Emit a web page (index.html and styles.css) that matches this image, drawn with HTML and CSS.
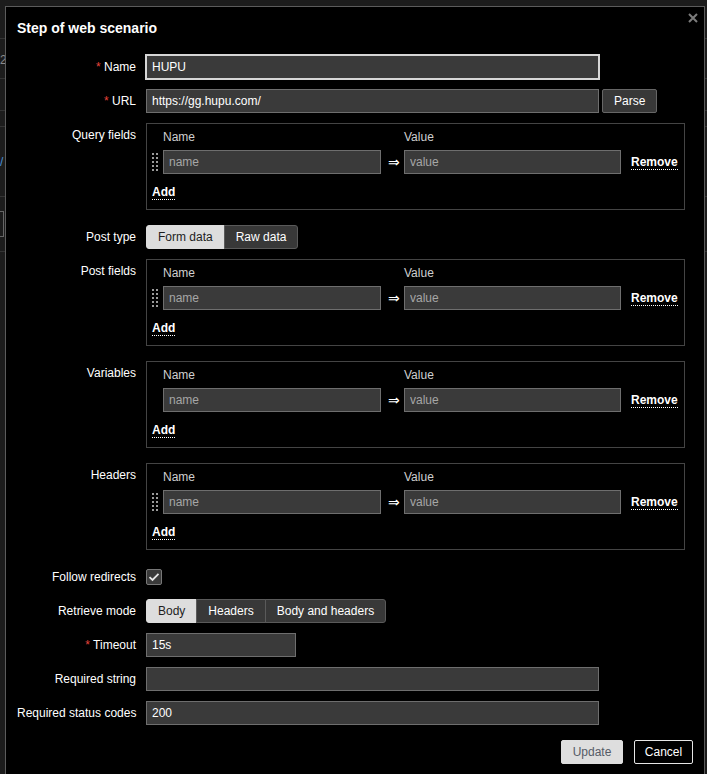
FILE: index.html
```html
<!DOCTYPE html>
<html>
<head>
<meta charset="utf-8">
<link rel="stylesheet" href="styles.css">
</head>
<body>
<div class="bg">
  <div class="bg-row r1"></div>
  <div class="bg-row r2"><span class="bg-num">2</span></div>
  <div class="bg-row r3"></div>
  <div class="bg-row r4"></div>
  <div class="bg-row r5"><span class="bg-link">/</span></div>
  <div class="bg-row r6"><span class="bg-input"></span></div>
</div>

<div class="dialog">
  <div class="dlg-head">
    <h4 class="dlg-title">Step of web scenario</h4>
    <span class="close"><svg width="10" height="10" viewBox="0 0 10 10"><path d="M1 1L9 9M9 1L1 9" stroke="#7c7c7c" stroke-width="2"/></svg></span>
  </div>

  <div class="form">
    <div class="lbl"><span class="req">*</span> Name</div>
    <div class="fld"><input class="in wide focus" value="HUPU"></div>

    <div class="lbl"><span class="req">*</span> URL</div>
    <div class="fld url"><input class="in wide" value="https://gg.hupu.com/"><button class="btn">Parse</button></div>

    <div class="lbl">Query fields</div>
    <div class="kv">
      <div class="kv-grid">
        <span></span><span class="th">Name</span><span></span><span class="th">Value</span><span></span>
      </div>
      <div class="kv-grid row">
        <span class="drag"><svg width="6" height="18" viewBox="0 0 6 18"><g fill="#9a9a9a"><rect x="0" y="0" width="2" height="2"/><rect x="4" y="0" width="2" height="2"/><rect x="0" y="4" width="2" height="2"/><rect x="4" y="4" width="2" height="2"/><rect x="0" y="8" width="2" height="2"/><rect x="4" y="8" width="2" height="2"/><rect x="0" y="12" width="2" height="2"/><rect x="4" y="12" width="2" height="2"/><rect x="0" y="16" width="2" height="2"/><rect x="4" y="16" width="2" height="2"/></g></svg></span>
        <input class="in cell" placeholder="name">
        <span class="arrow">⇒</span>
        <input class="in cell" placeholder="value">
        <span class="act"><a class="link">Remove</a></span>
      </div>
      <div class="add"><a class="link">Add</a></div>
    </div>

    <div class="lbl">Post type</div>
    <div class="fld seg"><button class="on">Form data</button><button>Raw data</button></div>

    <div class="lbl">Post fields</div>
    <div class="kv">
      <div class="kv-grid">
        <span></span><span class="th">Name</span><span></span><span class="th">Value</span><span></span>
      </div>
      <div class="kv-grid row">
        <span class="drag"><svg width="6" height="18" viewBox="0 0 6 18"><g fill="#9a9a9a"><rect x="0" y="0" width="2" height="2"/><rect x="4" y="0" width="2" height="2"/><rect x="0" y="4" width="2" height="2"/><rect x="4" y="4" width="2" height="2"/><rect x="0" y="8" width="2" height="2"/><rect x="4" y="8" width="2" height="2"/><rect x="0" y="12" width="2" height="2"/><rect x="4" y="12" width="2" height="2"/><rect x="0" y="16" width="2" height="2"/><rect x="4" y="16" width="2" height="2"/></g></svg></span>
        <input class="in cell" placeholder="name">
        <span class="arrow">⇒</span>
        <input class="in cell" placeholder="value">
        <span class="act"><a class="link">Remove</a></span>
      </div>
      <div class="add"><a class="link">Add</a></div>
    </div>

    <div class="lbl">Variables</div>
    <div class="kv">
      <div class="kv-grid">
        <span></span><span class="th">Name</span><span></span><span class="th">Value</span><span></span>
      </div>
      <div class="kv-grid row">
        <span class="drag"></span>
        <input class="in cell" placeholder="name">
        <span class="arrow">⇒</span>
        <input class="in cell" placeholder="value">
        <span class="act"><a class="link">Remove</a></span>
      </div>
      <div class="add"><a class="link">Add</a></div>
    </div>

    <div class="lbl">Headers</div>
    <div class="kv">
      <div class="kv-grid">
        <span></span><span class="th">Name</span><span></span><span class="th">Value</span><span></span>
      </div>
      <div class="kv-grid row">
        <span class="drag"><svg width="6" height="18" viewBox="0 0 6 18"><g fill="#9a9a9a"><rect x="0" y="0" width="2" height="2"/><rect x="4" y="0" width="2" height="2"/><rect x="0" y="4" width="2" height="2"/><rect x="4" y="4" width="2" height="2"/><rect x="0" y="8" width="2" height="2"/><rect x="4" y="8" width="2" height="2"/><rect x="0" y="12" width="2" height="2"/><rect x="4" y="12" width="2" height="2"/><rect x="0" y="16" width="2" height="2"/><rect x="4" y="16" width="2" height="2"/></g></svg></span>
        <input class="in cell" placeholder="name">
        <span class="arrow">⇒</span>
        <input class="in cell" placeholder="value">
        <span class="act"><a class="link">Remove</a></span>
      </div>
      <div class="add"><a class="link">Add</a></div>
    </div>

    <div class="lbl">Follow redirects</div>
    <div class="fld chk-row"><span class="chk"><svg width="12" height="10" viewBox="0 0 12 10"><path d="M1.5 5.2L4.5 8L10.5 1.8" fill="none" stroke="#e6e6e6" stroke-width="1.8"/></svg></span></div>

    <div class="lbl">Retrieve mode</div>
    <div class="fld seg"><button class="on">Body</button><button>Headers</button><button>Body and headers</button></div>

    <div class="lbl"><span class="req">*</span> Timeout</div>
    <div class="fld"><input class="in short" value="15s"></div>

    <div class="lbl">Required string</div>
    <div class="fld"><input class="in wide" value=""></div>

    <div class="lbl">Required status codes</div>
    <div class="fld"><input class="in wide" value="200"></div>
  </div>

  <div class="foot">
    <button class="b-update">Update</button>
    <button class="b-cancel">Cancel</button>
  </div>
</div>
</body>
</html>
```

FILE: styles.css
```css
html, body {
  margin: 0;
  height: 774px;
  overflow: hidden;
}
body {
  background: #1c1c1c;
  font-family: "Liberation Sans", Arial, sans-serif;
  font-size: 12px;
  color: #ffffff;
}

/* background page */
.bg {
  display: flex;
  flex-direction: column;
}
.bg-row {
  border-bottom: 1px solid #343434;
  box-sizing: border-box;
  position: relative;
  font-size: 12px;
}
.r1 { height: 39px; }
.r2 { height: 40px; }
.r3 { height: 32px; }
.r4 { height: 16px; }
.r5 { height: 70px; }
.r6 { height: 55px; }
.bg-num {
  display: block;
  margin-top: 14px;
  color: #8a8a8a;
}
.bg-link {
  display: block;
  margin-top: 28px;
  color: #4a90d9;
}
.bg-input {
  display: block;
  margin-left: -4px;
  margin-top: 14px;
  width: 6px;
  height: 24px;
  border: 1px solid #666;
}

/* dialog */
.dialog {
  position: absolute;
  left: 5px;
  top: 6px;
  width: 700px;
  height: 800px;
  box-sizing: border-box;
  border: 1px solid #5c5c5c;
  background: #000000;
  padding: 0 11px;
}
.dlg-head {
  padding-top: 12px;
}
.dlg-title {
  margin: 0;
  font-size: 14px;
  font-weight: bold;
  line-height: 18px;
}
.close {
  position: absolute;
  left: 682px;
  top: 6px;
  width: 10px;
  height: 10px;
  display: flex;
}

.form {
  margin-top: 18px;
  display: grid;
  grid-template-columns: 119px 1fr;
  column-gap: 10px;
  row-gap: 10px;
  align-items: start;
}
.lbl {
  text-align: right;
  line-height: 24px;
  white-space: nowrap;
}
.req {
  color: #e8443c;
}
.fld {
  display: flex;
  align-items: center;
  height: 24px;
}
.url {
  gap: 3px;
}

.in {
  box-sizing: border-box;
  height: 24px;
  background: #3a3a3a;
  border: 1px solid #6e6e6e;
  color: #ffffff;
  font-family: inherit;
  font-size: 12px;
  padding: 0 5px;
  margin: 0;
  border-radius: 0;
  outline: none;
}
.in::placeholder {
  color: #a6a6a6;
}
.wide { width: 453px; }
.short { width: 150px; }
.focus {
  border-color: #d6d6d6;
  box-shadow: 0 0 0 1px #d6d6d6;
}

.btn {
  height: 24px;
  padding: 0 11px;
  background: #383838;
  border: 1px solid #666666;
  border-radius: 2px;
  color: #ffffff;
  font-family: inherit;
  font-size: 12px;
}

/* key/value boxes */
.kv {
  width: 539px;
  box-sizing: border-box;
  border: 1px solid #444444;
  padding: 4px 0 8px 5px;
  margin-bottom: 5px;
}
.kv-grid {
  display: grid;
  grid-template-columns: 11px 218px 23px 217px auto;
  align-items: center;
  line-height: 18px;
}
.th {
  color: #cfcfcf;
}
.row {
  margin-top: 4px;
  height: 24px;
}
.cell {
  width: 100%;
}
.drag {
  display: flex;
  align-items: center;
  height: 24px;
}
.arrow {
  text-align: center;
  font-size: 14px;
  padding-left: 2px;
}
.act {
  padding-left: 10px;
}
.link {
  font-weight: bold;
  color: #ffffff;
  border-bottom: 1px dotted #ffffff;
  line-height: 14px;
  display: inline-block;
}
.add {
  margin-top: 9px;
  line-height: 18px;
  height: 18px;
  display: flex;
  align-items: center;
}

/* segmented buttons */
.seg button {
  height: 24px;
  padding: 0 11px;
  background: #383838;
  border: 1px solid #5a5a5a;
  color: #ffffff;
  font-family: inherit;
  font-size: 12px;
  margin: 0;
  border-radius: 0;
}
.seg button + button {
  border-left: 1px solid #5a5a5a;
  margin-left: -1px;
}
.seg button:first-child { border-radius: 3px 0 0 3px; }
.seg button:last-child { border-radius: 0 3px 3px 0; }
.seg .on {
  background: #dddddd;
  border-color: #dddddd;
  color: #1e1e1e;
}

.chk {
  width: 16px;
  height: 16px;
  box-sizing: border-box;
  background: #3a3a3a;
  border: 1px solid #777777;
  border-radius: 2px;
  display: flex;
  align-items: center;
  justify-content: center;
}

.foot {
  margin-top: 15px;
  display: flex;
  justify-content: flex-end;
  gap: 11px;
}
.foot button {
  height: 24px;
  font-family: inherit;
  font-size: 12px;
  border-radius: 2px;
  margin: 0;
}
.b-update {
  width: 62px;
  background: #dedede;
  border: 1px solid #dedede;
  color: #555b66;
}
.b-cancel {
  width: 59px;
  background: #000000;
  border: 1px solid #e6e6e6;
  color: #ffffff;
}
```
